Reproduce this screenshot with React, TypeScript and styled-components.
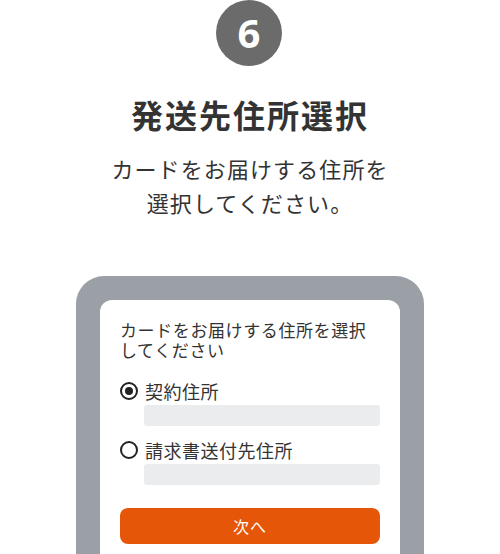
import styled, { createGlobalStyle } from "styled-components";

const GlobalStyle = createGlobalStyle`
  html, body {
    margin: 0;
    padding: 0;
    background: #ffffff;
  }
  body {
    font-family: "Noto Sans CJK JP", "Noto Sans", sans-serif;
    color: #333333;
    overflow: hidden;
  }
`;

const options = [
  { label: "契約住所", checked: true },
  { label: "請求書送付先住所", checked: false },
];

export default function App() {
  return (
    <>
      <GlobalStyle />
      <Wrapper>
        <StepBadge>6</StepBadge>
        <Title>発送先住所選択</Title>
        <Lead>
          カードをお届けする住所を
          <br />
          選択してください。
        </Lead>
        <PhoneFrame>
          <Screen>
            <Question>
              カードをお届けする住所を選択
              <br />
              してください
            </Question>
            <OptionList>
              {options.map((o) => (
                <Option key={o.label}>
                  <RadioRow>
                    <Radio $checked={o.checked} />
                    <RadioLabel>{o.label}</RadioLabel>
                  </RadioRow>
                  <AddressBar />
                </Option>
              ))}
            </OptionList>
            <NextButton>次へ</NextButton>
          </Screen>
        </PhoneFrame>
      </Wrapper>
    </>
  );
}

const Wrapper = styled.div`
  display: flex;
  flex-direction: column;
  align-items: center;
  width: 500px;
  height: 554px;
  overflow: hidden;
`;

const StepBadge = styled.div`
  width: 66px;
  height: 66px;
  margin-left: -2px;
  border-radius: 50%;
  background: #6b6b6b;
  color: #ffffff;
  display: flex;
  align-items: center;
  justify-content: center;
  font-family: "Noto Sans", "Open Sans", sans-serif;
  font-weight: 700;
  font-size: 40px;
  line-height: 1;
`;

const Title = styled.h1`
  margin: 29px 0 0;
  font-size: 32px;
  line-height: 38px;
  font-weight: 700;
  letter-spacing: 2px;
  color: #333333;
`;

const Lead = styled.p`
  margin: 18px 0 0;
  font-size: 22px;
  line-height: 34px;
  letter-spacing: 1.1px;
  text-align: center;
  color: #333333;
`;

const PhoneFrame = styled.div`
  margin-top: 57px;
  width: 348px;
  flex: 1;
  box-sizing: border-box;
  padding: 24px 24px 0;
  background: #9aa0a5;
  border-radius: 28px 28px 0 0;
  display: flex;
`;

const Screen = styled.div`
  flex: 1;
  background: #ffffff;
  border-radius: 12px 12px 0 0;
  padding: 20px 20px 0;
  display: flex;
  flex-direction: column;
`;

const Question = styled.p`
  margin: 0;
  font-size: 17px;
  line-height: 20px;
  letter-spacing: 0.6px;
  color: #333333;
`;

const OptionList = styled.div`
  margin-top: 19px;
  display: flex;
  flex-direction: column;
  gap: 12px;
`;

const Option = styled.div`
  display: flex;
  flex-direction: column;
  gap: 2px;
`;

const RadioRow = styled.div`
  display: flex;
  align-items: center;
  height: 24px;
  gap: 7px;
`;

const Radio = styled.span<{ $checked: boolean }>`
  width: 18px;
  height: 18px;
  box-sizing: border-box;
  border: 2px solid #222222;
  border-radius: 50%;
  display: flex;
  align-items: center;
  justify-content: center;
  &::after {
    content: "";
    width: 8px;
    height: 8px;
    border-radius: 50%;
    background: #222222;
    display: ${(p) => (p.$checked ? "block" : "none")};
  }
`;

const RadioLabel = styled.span`
  font-size: 18px;
  line-height: 24px;
  letter-spacing: 0.5px;
  color: #333333;
`;

const AddressBar = styled.div`
  margin-left: 24px;
  height: 21px;
  border-radius: 3px;
  background: #ebecee;
`;

const NextButton = styled.button`
  margin-top: 23px;
  height: 36px;
  border: none;
  border-radius: 8px;
  background: #e65608;
  color: #ffffff;
  font-family: "Noto Sans CJK JP", sans-serif;
  font-size: 16px;
  letter-spacing: 1px;
  cursor: pointer;
`;
